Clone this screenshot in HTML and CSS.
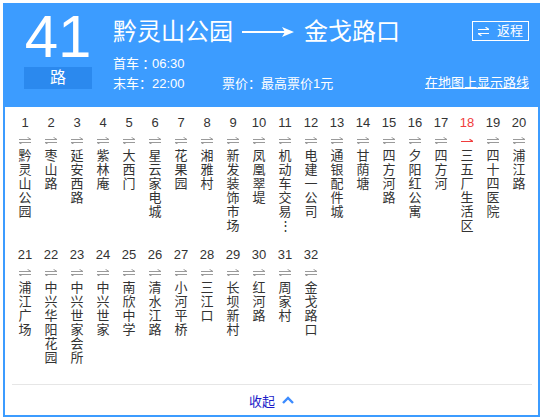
FILE: index.html
```html
<!DOCTYPE html>
<html lang="zh-CN">
<head>
<meta charset="utf-8">
<title>41路</title>
<link rel="stylesheet" href="styles.css">
</head>
<body>
<svg class="defs" width="0" height="0" aria-hidden="true">
  <symbol id="dir" viewBox="0 0 12 7">
    <path d="M0 2.5H12M12 2.5L8.5 0.3M0 5.5H12M0 5.5L3.5 7.7" fill="none" stroke="#9a9a9a" stroke-width="1"/>
  </symbol>
  <symbol id="dir-cur" viewBox="0 0 12 7">
    <path d="M0 4.5H12M12 4.5L8.5 2.3" fill="none" stroke="#f03c3c" stroke-width="1.2"/>
  </symbol>
</svg>
<div class="card">
  <header class="head">
    <div class="brand">
      <div class="num">41</div>
      <div class="lu">路</div>
    </div>
    <div class="main">
      <div class="title-row">
        <h1 class="title"><span>黔灵山公园</span><svg class="long-arrow" viewBox="0 0 52 12"><path d="M0 6H46" stroke="#fff" stroke-width="2"/><path d="M40 1L52 6L40 11L43 6Z" fill="#fff"/></svg><span>金戈路口</span></h1>
        <button class="ret" type="button"><svg class="ret-icon" viewBox="0 0 11 9"><path d="M0 2.5H11M11 2.5L7.5 0.2M0 6.5H11M0 6.5L3.5 8.8" fill="none" stroke="#fff" stroke-width="1.2"/></svg>返程</button>
      </div>
      <div class="info">
        <div class="info-line">首车<span class="colon">：</span>06:30</div>
        <div class="info-line"><span class="last">末车<span class="colon">：</span>22:00</span><span>票价<span class="colon">：</span>最高票价1元</span><a class="map-link" href="#">在地图上显示路线</a></div>
      </div>
    </div>
  </header>
  <div class="stops">
    <div class="stop"><div class="no">1</div><svg class="dir"><use href="#dir"/></svg><div class="name">黔灵山公园</div></div>
    <div class="stop"><div class="no">2</div><svg class="dir"><use href="#dir"/></svg><div class="name">枣山路</div></div>
    <div class="stop"><div class="no">3</div><svg class="dir"><use href="#dir"/></svg><div class="name">延安西路</div></div>
    <div class="stop"><div class="no">4</div><svg class="dir"><use href="#dir"/></svg><div class="name">紫林庵</div></div>
    <div class="stop"><div class="no">5</div><svg class="dir"><use href="#dir"/></svg><div class="name">大西门</div></div>
    <div class="stop"><div class="no">6</div><svg class="dir"><use href="#dir"/></svg><div class="name">星云家电城</div></div>
    <div class="stop"><div class="no">7</div><svg class="dir"><use href="#dir"/></svg><div class="name">花果园</div></div>
    <div class="stop"><div class="no">8</div><svg class="dir"><use href="#dir"/></svg><div class="name">湘雅村</div></div>
    <div class="stop"><div class="no">9</div><svg class="dir"><use href="#dir"/></svg><div class="name">新发装饰市场</div></div>
    <div class="stop"><div class="no">10</div><svg class="dir"><use href="#dir"/></svg><div class="name">凤凰翠堤</div></div>
    <div class="stop"><div class="no">11</div><svg class="dir"><use href="#dir"/></svg><div class="name">机动车交易⋮</div></div>
    <div class="stop"><div class="no">12</div><svg class="dir"><use href="#dir"/></svg><div class="name">电建一公司</div></div>
    <div class="stop"><div class="no">13</div><svg class="dir"><use href="#dir"/></svg><div class="name">通银配件城</div></div>
    <div class="stop"><div class="no">14</div><svg class="dir"><use href="#dir"/></svg><div class="name">甘荫塘</div></div>
    <div class="stop"><div class="no">15</div><svg class="dir"><use href="#dir"/></svg><div class="name">四方河路</div></div>
    <div class="stop"><div class="no">16</div><svg class="dir"><use href="#dir"/></svg><div class="name">夕阳红公寓</div></div>
    <div class="stop"><div class="no">17</div><svg class="dir"><use href="#dir"/></svg><div class="name">四方河</div></div>
    <div class="stop cur"><div class="no">18</div><svg class="dir"><use href="#dir-cur"/></svg><div class="name">三五厂生活区</div></div>
    <div class="stop"><div class="no">19</div><svg class="dir"><use href="#dir"/></svg><div class="name">四十四医院</div></div>
    <div class="stop"><div class="no">20</div><svg class="dir"><use href="#dir"/></svg><div class="name">浦江路</div></div>
    <div class="stop"><div class="no">21</div><svg class="dir"><use href="#dir"/></svg><div class="name">浦江广场</div></div>
    <div class="stop"><div class="no">22</div><svg class="dir"><use href="#dir"/></svg><div class="name">中兴华阳花园</div></div>
    <div class="stop"><div class="no">23</div><svg class="dir"><use href="#dir"/></svg><div class="name">中兴世家会所</div></div>
    <div class="stop"><div class="no">24</div><svg class="dir"><use href="#dir"/></svg><div class="name">中兴世家</div></div>
    <div class="stop"><div class="no">25</div><svg class="dir"><use href="#dir"/></svg><div class="name">南欣中学</div></div>
    <div class="stop"><div class="no">26</div><svg class="dir"><use href="#dir"/></svg><div class="name">清水江路</div></div>
    <div class="stop"><div class="no">27</div><svg class="dir"><use href="#dir"/></svg><div class="name">小河平桥</div></div>
    <div class="stop"><div class="no">28</div><svg class="dir"><use href="#dir"/></svg><div class="name">三江口</div></div>
    <div class="stop"><div class="no">29</div><svg class="dir"><use href="#dir"/></svg><div class="name">长坝新村</div></div>
    <div class="stop"><div class="no">30</div><svg class="dir"><use href="#dir"/></svg><div class="name">红河路</div></div>
    <div class="stop"><div class="no">31</div><svg class="dir"><use href="#dir"/></svg><div class="name">周家村</div></div>
    <div class="stop"><div class="no">32</div><svg class="dir"><use href="#dir"/></svg><div class="name">金戈路口</div></div>
  </div>
  <div class="sep"></div>
  <div class="foot"><a class="fold" href="#">收起</a><svg class="chev" viewBox="0 0 12 8"><path d="M1 7L6 2L11 7" fill="none" stroke="#3d8cff" stroke-width="2.4"/></svg></div>
</div>
</body>
</html>
```

FILE: styles.css
```css
body {
  margin: 0;
  font-family: "Liberation Sans", "Noto Sans CJK SC", sans-serif;
  color: #333;
  background: #fff;
}

.defs {
  position: absolute;
  width: 0;
  height: 0;
  overflow: hidden;
}

.card {
  margin: 3px;
  width: 533px;
  border: 2px solid #3c9cff;
}

.head {
  display: flex;
  height: 102px;
  box-sizing: border-box;
  padding: 6px 9px 0 19px;
  background: #3c9cff;
  color: #fff;
}

.brand {
  width: 68px;
  flex: none;
}

.num {
  font-size: 60px;
  line-height: 52px;
  text-align: center;
}

.lu {
  margin-top: 4px;
  height: 22px;
  line-height: 22px;
  background: #2b89ee;
  text-align: center;
  font-size: 16px;
}

.main {
  flex: 1;
  margin-left: 21px;
  padding-top: 5px;
}

.title-row {
  display: flex;
  align-items: center;
  justify-content: space-between;
  height: 32px;
}

.title {
  margin: 0;
  display: flex;
  align-items: center;
  font-size: 24px;
  font-weight: normal;
  line-height: 32px;
}

.long-arrow {
  width: 52px;
  height: 12px;
  margin: 0 10px 0 9px;
}

.ret {
  display: flex;
  align-items: center;
  gap: 8px;
  height: 20px;
  box-sizing: border-box;
  margin: 0 0 2px 0;
  padding: 0 5px;
  border: 1px solid #fff;
  background: none;
  color: #fff;
  font-family: inherit;
  font-size: 13px;
  line-height: 18px;
}

.ret-icon {
  width: 11px;
  height: 9px;
}

.info {
  margin-top: 6px;
  font-size: 13px;
  line-height: 19px;
}

.info-line {
  display: flex;
}

.colon {
  font-family: "Noto Sans CJK TC", sans-serif;
}

.last {
  width: 109px;
}

.map-link {
  margin-left: auto;
  color: #fff;
  text-decoration: underline;
}

.stops {
  display: grid;
  grid-template-columns: repeat(20, 26px);
  padding-left: 7px;
}

.stop {
  height: 132px;
  box-sizing: border-box;
  padding-top: 8px;
  display: flex;
  flex-direction: column;
  align-items: center;
}

.no {
  font-size: 13px;
  line-height: 16px;
}

.cur .no {
  color: #f03c3c;
}

.dir {
  display: block;
  width: 12px;
  height: 7px;
  margin-top: 6px;
}

.name {
  margin-top: 5px;
  width: 14px;
  font-size: 13px;
  line-height: 14px;
  text-align: center;
  word-break: break-all;
}

.sep {
  margin: 13px 6px 0 7px;
  border-top: 1px solid #e6e6e6;
}

.foot {
  height: 30px;
  display: flex;
  align-items: center;
  justify-content: center;
  gap: 7px;
}

.fold {
  color: #1c1cc8;
  font-size: 13px;
  text-decoration: none;
}

.chev {
  width: 12px;
  height: 8px;
}
```
